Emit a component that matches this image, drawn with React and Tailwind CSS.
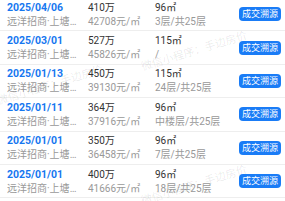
import React from 'react';

const rows = [
  { date: '2025/04/06', price: '410万', unit: '42708元/㎡', area: '96㎡', floor: '3层/共25层' },
  { date: '2025/03/01', price: '527万', unit: '45826元/㎡', area: '115㎡', floor: '/' },
  { date: '2025/01/13', price: '450万', unit: '39130元/㎡', area: '115㎡', floor: '24层/共25层' },
  { date: '2025/01/11', price: '364万', unit: '37916元/㎡', area: '96㎡', floor: '中楼层/共25层' },
  { date: '2025/01/01', price: '350万', unit: '36458元/㎡', area: '96㎡', floor: '7层/共25层' },
  { date: '2025/01/01', price: '400万', unit: '41666元/㎡', area: '96㎡', floor: '18层/共25层' },
];

const marks = [
  'left-[140px] top-[62px]',
  'left-[-4px] top-[96px]',
  'left-[140px] top-[196px]',
];

export default function App() {
  return (
    <div className="relative w-[285px] h-[201px] overflow-hidden bg-white" style={{ fontFamily: 'Roboto, "Noto Sans CJK SC", sans-serif' }}>
      <div className="-mt-[2px]">
        {rows.map((r, i) => (
          <div key={i} className="flex items-center h-[33.4px] border-b-[1.5px] border-[#eeeeee] pl-[7px]">
            <div className="w-[81px] flex flex-col">
              <span className="text-[10.5px] leading-[14px] font-bold text-[#1677f0]">{r.date}</span>
              <span className="text-[10px] leading-[13px] text-[#999999] truncate w-[72px]">远洋招商·上塘天澜府</span>
            </div>
            <div className="w-[67px] flex flex-col">
              <span className="text-[10px] leading-[14px] text-[#333333]">{r.price}</span>
              <span className="text-[10px] leading-[13px] text-[#999999]">{r.unit}</span>
            </div>
            <div className="w-[84px] flex flex-col">
              <span className="text-[10px] leading-[14px] text-[#333333]">{r.area}</span>
              <span className="text-[10px] leading-[13px] text-[#999999]">{r.floor}</span>
            </div>
            <button className="w-[42px] h-[14px] rounded-[4px] bg-[#1a7cf6] text-white text-[9px] leading-[14px] text-center whitespace-nowrap">成交溯源</button>
          </div>
        ))}
      </div>
      {marks.map((m, i) => (
        <div key={i} className={`absolute ${m} origin-top-left -rotate-[17deg] text-[11px] leading-[11px] text-black/[0.09] whitespace-nowrap pointer-events-none`}>微信小程序：手边房价</div>
      ))}
    </div>
  );
}
